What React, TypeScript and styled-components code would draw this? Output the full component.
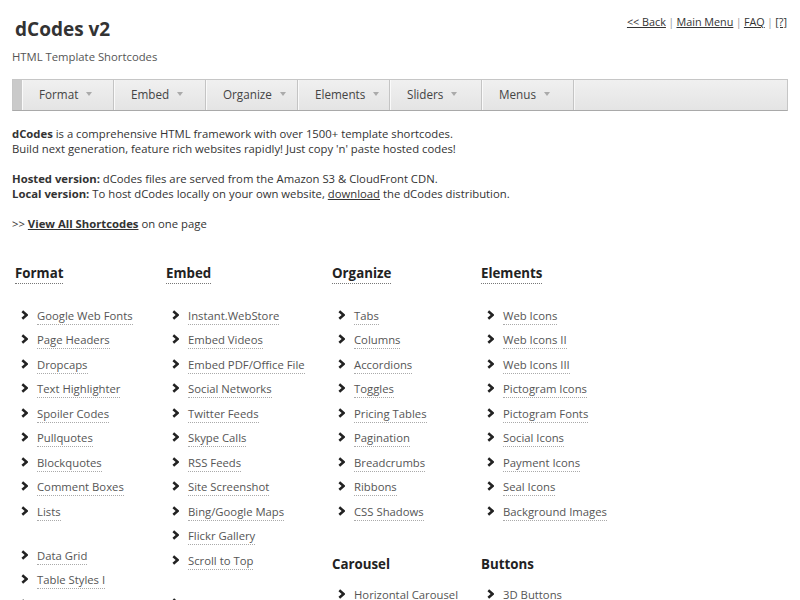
import React from "react";
import styled, { createGlobalStyle } from "styled-components";

const Global = createGlobalStyle`
  html, body { margin: 0; padding: 0; background: #fff; }
  body { font-family: "Open Sans", "Noto Sans", sans-serif; color: #333; }
`;

const Page = styled.div`
  padding: 14px 12px 0 12px;
  width: 776px;
  height: 586px;
  overflow: hidden;
`;

const Header = styled.header`
  display: flex;
  justify-content: space-between;
  align-items: flex-start;
`;

const Brand = styled.div`
  padding-left: 3px;
`;

const Title = styled.h1`
  margin: 2px 0 0 0;
  font-size: 19px;
  line-height: 26px;
  font-weight: 700;
  color: #333;
`;

const Subtitle = styled.div`
  margin-top: 7px;
  margin-left: -3px;
  font-size: 11.3px;
  line-height: 16px;
  color: #555;
`;

const TopLinks = styled.nav`
  font-size: 10.8px;
  line-height: 16px;
  color: #888;
  padding-right: 1px;
`;

const TopLink = styled.a`
  color: #333;
  text-decoration: underline;
`;

const Sep = styled.span`
  margin: 0 -0.5px;
  color: #999;
`;

const MenuBar = styled.nav`
  margin-top: 14px;
  height: 30px;
  display: flex;
  border: 1px solid #c6c6c6;
  border-bottom-color: #a9a9a9;
  background: linear-gradient(#f0f0f0, #e4e4e4);
`;

const MenuLead = styled.div`
  width: 9px;
  background: #cacaca;
`;

const MenuItem = styled.div`
  width: 92px;
  display: flex;
  align-items: center;
  padding: 0 0 3px 16px;
  box-sizing: border-box;
  border-left: 1px solid #fafafa;
  border-right: 1px solid #c4c4c4;
  font-size: 11.7px;
  color: #444;
`;

const MenuEnd = styled.div`
  flex: 1;
  border-left: 1px solid #f7f7f7;
`;

const Caret = styled.span`
  margin-left: 8px;
  width: 0;
  height: 0;
  border-left: 3px solid transparent;
  border-right: 3px solid transparent;
  border-top: 4px solid #aaa;
`;

const Intro = styled.div`
  margin-top: 15px;
  font-size: 11.3px;
  line-height: 15px;
  color: #333;
`;

const Para = styled.p`
  margin: 0 0 15px 0;
`;

const Strong = styled.b`
  color: #333;
`;

const UnderLink = styled.a`
  color: #333;
  text-decoration: underline;
`;

const Columns = styled.div`
  margin-top: 33px;
  margin-left: 3px;
  display: grid;
  grid-template-columns: 151px 166px 149px 1fr;
  align-items: start;
`;

const Column = styled.div`
  display: flex;
  flex-direction: column;
  align-items: flex-start;
`;

const Heading = styled.h3<{ $plain?: boolean }>`
  margin: ${(p) => (p.$plain ? "30px 0 0 0" : "0")};
  font-size: 13.3px;
  line-height: 18px;
  font-weight: 700;
  color: #222;
  padding-bottom: 1px;
  border-bottom: 1px dotted ${(p) => (p.$plain ? "transparent" : "#777")};
`;

const List = styled.ul<{ $gap: number }>`
  list-style: none;
  margin: ${(p) => p.$gap}px 0 0 0;
  padding: 0 0 0 6px;
`;

const Item = styled.li`
  height: 24.5px;
  display: flex;
  align-items: center;
  gap: 9px;
`;

const Chevron = styled.svg`
  width: 7px;
  height: 10px;
  flex: none;
  margin-top: -3px;
`;

const ItemLink = styled.a`
  font-size: 11.3px;
  line-height: 16px;
  color: #555;
  text-decoration: none;
  border-bottom: 1px dotted #aaa;
`;

type Group = { items: string[]; gap: number };
type Col = { title: string; groups: Group[]; extra?: { title: string; items: string[] } };

const columns: Col[] = [
  {
    title: "Format",
    groups: [
      {
        gap: 20,
        items: [
          "Google Web Fonts",
          "Page Headers",
          "Dropcaps",
          "Text Highlighter",
          "Spoiler Codes",
          "Pullquotes",
          "Blockquotes",
          "Comment Boxes",
          "Lists",
        ],
      },
      { gap: 19.5, items: ["Data Grid", "Table Styles I", "Table Styles II"] },
    ],
  },
  {
    title: "Embed",
    groups: [
      {
        gap: 20,
        items: [
          "Instant.WebStore",
          "Embed Videos",
          "Embed PDF/Office File",
          "Social Networks",
          "Twitter Feeds",
          "Skype Calls",
          "RSS Feeds",
          "Site Screenshot",
          "Bing/Google Maps",
          "Flickr Gallery",
          "Scroll to Top",
        ],
      },
      { gap: 19, items: ["Lightbox"] },
    ],
  },
  {
    title: "Organize",
    groups: [
      {
        gap: 20,
        items: [
          "Tabs",
          "Columns",
          "Accordions",
          "Toggles",
          "Pricing Tables",
          "Pagination",
          "Breadcrumbs",
          "Ribbons",
          "CSS Shadows",
        ],
      },
    ],
    extra: { title: "Carousel", items: ["Horizontal Carousel"] },
  },
  {
    title: "Elements",
    groups: [
      {
        gap: 20,
        items: [
          "Web Icons",
          "Web Icons II",
          "Web Icons III",
          "Pictogram Icons",
          "Pictogram Fonts",
          "Social Icons",
          "Payment Icons",
          "Seal Icons",
          "Background Images",
        ],
      },
    ],
    extra: { title: "Buttons", items: ["3D Buttons"] },
  },
];

const Arrow = () => (
  <Chevron viewBox="0 0 7 10">
    <path d="M1.3 1.2 L5.6 5 L1.3 8.8" fill="none" stroke="#222" strokeWidth="2.5" strokeLinejoin="miter" />
  </Chevron>
);

const Entries = ({ items, gap }: { items: string[]; gap: number }) => (
  <List $gap={gap}>
    {items.map((t) => (
      <Item key={t}>
        <Arrow />
        <ItemLink href="#">{t}</ItemLink>
      </Item>
    ))}
  </List>
);

export default function App() {
  return (
    <>
      <Global />
      <Page>
        <Header>
          <Brand>
            <Title>dCodes v2</Title>
            <Subtitle>HTML Template Shortcodes</Subtitle>
          </Brand>
          <TopLinks>
            <TopLink href="#">&lt;&lt; Back</TopLink>
            <Sep> | </Sep>
            <TopLink href="#">Main Menu</TopLink>
            <Sep> | </Sep>
            <TopLink href="#">FAQ</TopLink>
            <Sep> | </Sep>
            <TopLink href="#">[?]</TopLink>
          </TopLinks>
        </Header>

        <MenuBar>
          <MenuLead />
          {["Format", "Embed", "Organize", "Elements", "Sliders", "Menus"].map((m) => (
            <MenuItem key={m}>
              {m}
              <Caret />
            </MenuItem>
          ))}
          <MenuEnd />
        </MenuBar>

        <Intro>
          <Para>
            <Strong>dCodes</Strong> is a comprehensive HTML framework with over 1500+ template shortcodes.
            <br />
            Build next generation, feature rich websites rapidly! Just copy 'n' paste hosted codes!
          </Para>
          <Para>
            <Strong>Hosted version:</Strong> dCodes files are served from the Amazon S3 &amp; CloudFront CDN.
            <br />
            <Strong>Local version:</Strong> To host dCodes locally on your own website,{" "}
            <UnderLink href="#">download</UnderLink> the dCodes distribution.
          </Para>
          <Para>
            &gt;&gt; <UnderLink href="#"><b>View All Shortcodes</b></UnderLink> on one page
          </Para>
        </Intro>

        <Columns>
          {columns.map((c) => (
            <Column key={c.title}>
              <Heading>{c.title}</Heading>
              {c.groups.map((g, i) => (
                <Entries key={i} items={g.items} gap={g.gap} />
              ))}
              {c.extra && (
                <>
                  <Heading $plain>{c.extra.title}</Heading>
                  <Entries items={c.extra.items} gap={9} />
                </>
              )}
            </Column>
          ))}
        </Columns>
      </Page>
    </>
  );
}
